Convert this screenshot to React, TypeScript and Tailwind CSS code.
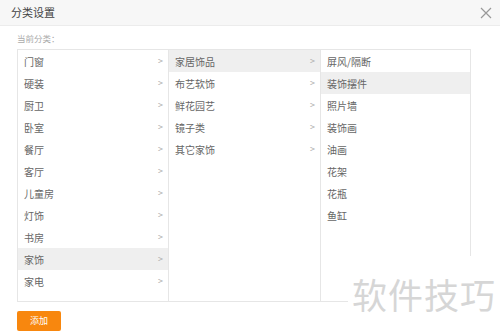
import React from "react";

const col1 = ["门窗", "硬装", "厨卫", "卧室", "餐厅", "客厅", "儿童房", "灯饰", "书房", "家饰", "家电"];
const col2 = ["家居饰品", "布艺软饰", "鲜花园艺", "镜子类", "其它家饰"];
const col3 = ["屏风/隔断", "装饰摆件", "照片墙", "装饰画", "油画", "花架", "花瓶", "鱼缸"];

function Row({ label, arrow, active }: { label: string; arrow?: boolean; active?: boolean }) {
  return (
    <div className={`flex h-[22px] items-center justify-between pl-[6px] pr-[5px] ${active ? "bg-[#efefef]" : ""}`}>
      <span>{label}</span>
      {arrow && <span className="text-[9px] text-[#aaa]">&gt;</span>}
    </div>
  );
}

export default function App() {
  return (
    <div
      className="relative h-[332px] w-[500px] overflow-hidden bg-white text-[10px] text-[#666]"
      style={{ fontFamily: '"Noto Sans CJK SC", "Liberation Sans", sans-serif' }}
    >
      <div className="flex h-[26px] items-center justify-between border-b border-[#ececec] bg-[#f7f7f7] pl-[11px] pr-[8px]">
        <span className="text-[11px] text-[#444]">分类设置</span>
        <svg width="12" height="12" viewBox="0 0 12 12" className="mt-[1px]">
          <path d="M1 1L11 11M11 1L1 11" stroke="#999" strokeWidth="1.2" fill="none" />
        </svg>
      </div>
      <div className="pl-[17px] pt-[5px]">
        <div className="h-[18px] text-[8.5px] leading-[14px] text-[#aaa]">当前分类：</div>
        <div className="flex h-[253px] w-[454px] border border-[#e6e6e6]">
          <div className="w-[151px] border-r border-[#e6e6e6]">
            {col1.map((c) => (
              <Row key={c} label={c} arrow active={c === "家饰"} />
            ))}
          </div>
          <div className="w-[152px] border-r border-[#e6e6e6]">
            {col2.map((c) => (
              <Row key={c} label={c} arrow active={c === "家居饰品"} />
            ))}
          </div>
          <div className="flex-1">
            {col3.map((c) => (
              <Row key={c} label={c} active={c === "装饰摆件"} />
            ))}
          </div>
        </div>
        <button className="mt-[9px] h-[20px] w-[44px] rounded-[2px] bg-[#f8870e] text-[9px] text-white">添加</button>
      </div>
      <div className="absolute left-[348px] top-[256px] flex h-[64px] w-[152px] items-end justify-center bg-white pb-[9px]">
        <span className="text-[35px] leading-none tracking-[1px] text-[#d6d6d6]">软件技巧</span>
      </div>
    </div>
  );
}
